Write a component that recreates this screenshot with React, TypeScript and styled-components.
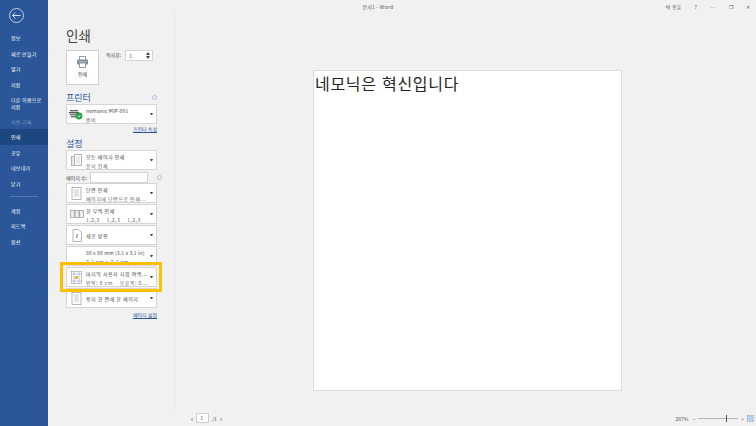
import React from "react";
import styled, { createGlobalStyle } from "styled-components";

const FONT = `"Noto Sans CJK KR", "Noto Sans", sans-serif`;

const GlobalStyle = createGlobalStyle`
  html, body { margin: 0; padding: 0; background: #f1f1f1; }
  body { font-family: ${FONT}; color: #444; }
  * { box-sizing: border-box; }
`;

const Shell = styled.div`
  display: flex;
  width: 756px;
  height: 426px;
  overflow: hidden;
  background: #f1f1f1;
`;

const Sidebar = styled.nav`
  display: flex;
  flex-direction: column;
  flex: 0 0 48px;
  background: #2b579a;
`;

const BackButton = styled.div`
  display: flex;
  height: 30px;
  padding: 8px 0 0 9px;
  color: #fff;
`;

const NavItem = styled.div<{ $active?: boolean; $dim?: boolean; $tall?: boolean }>`
  display: flex;
  align-items: center;
  padding: 0 0 0 11px;
  height: ${(p) => (p.$tall ? "21px" : "15.6px")};
  font-size: 5px;
  letter-spacing: 0.25px;
  line-height: 7px;
  white-space: nowrap;
  color: ${(p) => (p.$dim ? "#7f9cc6" : "#fff")};
  background: ${(p) => (p.$active ? "#1c4780" : "transparent")};
`;

const NavDivider = styled.div`
  height: 1px;
  margin: 5px 10px 5px;
  background: #5479ae;
`;

const Main = styled.div`
  flex: 1;
  display: flex;
  flex-direction: column;
  min-width: 0;
`;

const TitleBar = styled.div`
  display: flex;
  align-items: center;
  height: 12px;
  font-size: 5px;
  letter-spacing: 0.25px;
  color: #555;
`;

const TitleText = styled.div`
  flex: 1;
  text-align: center;
  padding-left: 42px;
`;

const WindowControls = styled.div`
  display: flex;
  align-items: center;
  gap: 13px;
  padding-right: 6px;
`;

const Body = styled.div`
  flex: 1;
  display: flex;
  min-height: 0;
`;

const Settings = styled.section`
  position: relative;
  flex: 0 0 127px;
  min-width: 0;
  padding: 14px 17px 0 18px;
  border-right: 1px solid #e6e6e6;
`;

const PageTitle = styled.h1`
  margin: 0;
  height: 24px;
  font-size: 13.5px;
  font-weight: 400;
  line-height: 18px;
  color: #444;
`;

const PrintRow = styled.div`
  display: flex;
  height: 35px;
  gap: 7px;
`;

const PrintButton = styled.div`
  display: flex;
  flex-direction: column;
  align-items: center;
  width: 33px;
  height: 35px;
  padding-top: 5px;
  background: #fff;
  border: 1px solid #d0d0d0;
  font-size: 5px;
  color: #444;
`;

const PrintLabel = styled.span`
  margin-top: 2px;
  line-height: 7px;
`;

const Copies = styled.div`
  display: flex;
  align-items: flex-start;
  gap: 4px;
  font-size: 5px;
`;

const CopiesLabel = styled.span`
  line-height: 10px;
`;

const Spinner = styled.div`
  display: flex;
  align-items: center;
  justify-content: space-between;
  width: 28px;
  height: 11px;
  padding: 0 2px 0 3px;
  background: #fff;
  border: 1px solid #d5d5d5;
  color: #444;
`;

const Arrows = styled.div`
  display: flex;
  flex-direction: column;
  gap: 1px;
`;

const SectionHead = styled.div<{ $top: number }>`
  display: flex;
  justify-content: space-between;
  align-items: center;
  height: 13px;
  margin-top: ${(p) => p.$top}px;
  font-size: 9px;
  color: #2b579a;
`;

const InfoDot = styled.span`
  width: 5px;
  height: 5px;
  border: 1px solid #a9c1e0;
  border-radius: 50%;
`;

const Select = styled.div<{ $gap?: number }>`
  display: flex;
  align-items: center;
  height: 20px;
  margin-bottom: ${(p) => p.$gap ?? 1}px;
  background: #fff;
  border: 1px solid #d5d5d5;
  font-size: 5px;
  letter-spacing: 0.5px;
  color: #444;
`;

const SelectIcon = styled.div`
  display: flex;
  justify-content: center;
  flex: 0 0 19px;
`;

const SelectText = styled.div`
  flex: 1;
  min-width: 0;
  white-space: nowrap;
  overflow: hidden;
  line-height: 9px;
  padding-top: 1px;
`;

const SubLine = styled.div`
  display: flex;
  gap: 7px;
  color: #666;
  line-height: 9px;
`;

const Latin = styled.div`
  letter-spacing: 0.15px;
`;

const Caret = styled.span`
  width: 0;
  height: 0;
  flex: 0 0 3px;
  margin: 0 3px 0 1px;
  border-left: 1.5px solid transparent;
  border-right: 1.5px solid transparent;
  border-top: 2px solid #444;
`;

const LinkRow = styled.div`
  text-align: right;
  height: 9px;
  font-size: 5px;
  line-height: 9px;
  color: #2b579a;
  text-decoration: underline;
`;

const PagesRow = styled.div`
  display: flex;
  align-items: center;
  height: 12px;
  font-size: 5px;
  gap: 3px;
  position: relative;
`;

const PagesInput = styled.div`
  width: 58px;
  height: 11px;
  background: #fff;
  border: 1px solid #d5d5d5;
`;

const PagesInfo = styled(InfoDot)`
  position: absolute;
  right: -5px;
  top: 4px;
`;

const Highlight = styled.div`
  position: absolute;
  left: 12px;
  top: 250px;
  width: 102px;
  height: 30px;
  border: 3px solid #fdc000;
  pointer-events: none;
`;

const Preview = styled.section`
  flex: 1;
  display: flex;
  flex-direction: column;
  padding: 58px 0 0 138px;
`;

const Sheet = styled.div`
  width: 309px;
  height: 321px;
  padding: 0 1px;
  background: #fff;
  border: 1px solid #dcdcdc;
  font-size: 16px;
  line-height: 24px;
  letter-spacing: 0.7px;
  word-spacing: 1px;
  color: #222;
`;

const Footer = styled.div`
  display: flex;
  align-items: center;
  flex: 0 0 16px;
  padding-left: 143px;
  font-size: 5px;
  color: #555;
`;

const Pager = styled.div`
  display: flex;
  align-items: center;
  gap: 3px;
`;

const PageBox = styled.div`
  width: 13px;
  height: 10px;
  padding-left: 3px;
  background: #fff;
  border: 1px solid #cfcfcf;
  line-height: 8px;
  color: #2b579a;
`;

const PagerArrow = styled.span`
  font-size: 7px;
  line-height: 7px;
  color: #333;
`;

const ZoomBar = styled.div`
  display: flex;
  align-items: center;
  gap: 3px;
  margin-left: auto;
  padding-right: 2px;
`;

const ZoomPercent = styled.span`
  margin-right: 1px;
`;

const ZoomTrack = styled.div`
  position: relative;
  width: 40px;
  height: 1px;
  background: #b5b5b5;
`;

const ZoomThumb = styled.span`
  position: absolute;
  left: 28px;
  top: -3px;
  width: 1px;
  height: 7px;
  background: #555;
`;

const PrinterIcon = () => (
  <svg width="13" height="12" viewBox="0 0 13 12">
    <rect x="3.5" y="0.5" width="6" height="4" fill="#fff" stroke="#9a9a9a" />
    <rect x="1" y="3.5" width="11" height="5" rx="1" fill="#7b8ba0" />
    <rect x="3.5" y="7" width="6" height="4.5" fill="#fff" stroke="#9a9a9a" />
    <rect x="2.5" y="5" width="8" height="1" fill="#a9b6c6" />
  </svg>
);

const DeviceIcon = () => (
  <svg width="15" height="12" viewBox="0 0 15 12">
    <rect x="1" y="2" width="8" height="1.4" fill="#666" />
    <rect x="0" y="4" width="10" height="1.4" fill="#555" />
    <rect x="1" y="6" width="8" height="1.4" fill="#777" />
    <rect x="2" y="8" width="6" height="1.4" fill="#666" />
    <circle cx="10" cy="8" r="3.4" fill="#1f9e3f" />
    <path d="M8.4 8l1.2 1.2 2-2.2" stroke="#fff" strokeWidth="1" fill="none" />
  </svg>
);

const SheetsIcon = () => (
  <svg width="11" height="13" viewBox="0 0 11 13" fill="#fff" stroke="#a5a5a5" strokeWidth="0.8">
    <rect x="0.5" y="2.5" width="6" height="9" fill="#e6e6e6" />
    <rect x="3.5" y="0.5" width="7" height="11" />
    <path d="M5 3h4M5 5h4M5 7h4M5 9h4" strokeWidth="0.5" />
  </svg>
);

const PageIcon = () => (
  <svg width="11" height="13" viewBox="0 0 11 13" fill="#fff" stroke="#a5a5a5" strokeWidth="0.8">
    <rect x="1" y="0.5" width="9" height="12" />
    <path d="M3 3h5M3 5h5M3 7h5M3 9h5" strokeWidth="0.6" />
  </svg>
);

const CollateIcon = () => (
  <svg width="14" height="10" viewBox="0 0 14 10" fill="#eee" stroke="#999" strokeWidth="0.7">
    <rect x="0.5" y="1.5" width="4" height="7" />
    <rect x="5" y="1.5" width="4" height="7" />
    <rect x="9.500" y="1.500" width="4" height="7" />
  </svg>
);

const PortraitIcon = () => (
  <svg width="10" height="13" viewBox="0 0 10 13" fill="#fff" stroke="#a5a5a5" strokeWidth="0.8">
    <path d="M1 0.5h5.500l3 3v9h-8.500z" />
    <path d="M4 9l2-4M5 5v4" strokeWidth="0.6" stroke="#777" />
  </svg>
);

const MarginIcon = () => (
  <svg width="11" height="13" viewBox="0 0 11 13" fill="#fff" stroke="#8ba3c2" strokeWidth="0.6">
    <rect x="0.5" y="0.5" width="10" height="12" stroke="#999" />
    <path d="M3 .5v12M8 .5v12M.5 3h10M.5 10h10" />
    <rect x="4" y="5" width="3" height="3" fill="#f3b23c" stroke="none" />
  </svg>
);

const BackIcon = () => (
  <svg width="15" height="15" viewBox="0 0 15 15" fill="none" stroke="#fff">
    <circle cx="7.500" cy="7.500" r="7" strokeWidth="0.7" />
    <path d="M11.500 7.500h-8M6.500 4.500l-3 3 3 3" strokeWidth="0.8" />
  </svg>
);

const navTop = ["정보", "새로 만들기", "열기", "저장"];
const navMid = ["공유", "내보내기", "닫기"];
const navBottom = ["계정", "피드백", "옵션"];

export default function App() {
  return (
    <Shell>
      <GlobalStyle />
      <Sidebar>
        <BackButton>
          <BackIcon />
        </BackButton>
        {navTop.map((label) => (
          <NavItem key={label}>{label}</NavItem>
        ))}
        <NavItem $tall>
          <span>
            다른 이름으로
            <br />
            저장
          </span>
        </NavItem>
        <NavItem $dim>사용 기록</NavItem>
        <NavItem $active>인쇄</NavItem>
        {navMid.map((label) => (
          <NavItem key={label}>{label}</NavItem>
        ))}
        <NavDivider />
        {navBottom.map((label) => (
          <NavItem key={label}>{label}</NavItem>
        ))}
      </Sidebar>
      <Main>
        <TitleBar>
          <TitleText>문서1 - Word</TitleText>
          <WindowControls>
            <span>박 종훈</span>
            <span>?</span>
            <span>─</span>
            <span>❐</span>
            <span>✕</span>
          </WindowControls>
        </TitleBar>
        <Body>
          <Settings>
            <PageTitle>인쇄</PageTitle>
            <PrintRow>
              <PrintButton>
                <PrinterIcon />
                <PrintLabel>인쇄</PrintLabel>
              </PrintButton>
              <Copies>
                <CopiesLabel>복사본:</CopiesLabel>
                <Spinner>
                  1
                  <Arrows>
                    <svg width="4" height="3" viewBox="0 0 4 3">
                      <path d="M2 0l2 3H0z" fill="#444" />
                    </svg>
                    <svg width="4" height="3" viewBox="0 0 4 3">
                      <path d="M2 3l2-3H0z" fill="#444" />
                    </svg>
                  </Arrows>
                </Spinner>
              </Copies>
            </PrintRow>
            <SectionHead $top={6}>
              프린터
              <InfoDot />
            </SectionHead>
            <Select $gap={0}>
              <SelectIcon>
                <DeviceIcon />
              </SelectIcon>
              <SelectText>
                <Latin>nemonic MIP-001</Latin>
                <SubLine>준비</SubLine>
              </SelectText>
              <Caret />
            </Select>
            <LinkRow>프린터 속성</LinkRow>
            <SectionHead $top={4}>설정</SectionHead>
            <Select>
              <SelectIcon>
                <SheetsIcon />
              </SelectIcon>
              <SelectText>
                모든 페이지 인쇄
                <SubLine>문서 전체</SubLine>
              </SelectText>
              <Caret />
            </Select>
            <PagesRow>
              페이지 수:
              <PagesInput />
              <PagesInfo />
            </PagesRow>
            <Select>
              <SelectIcon>
                <PageIcon />
              </SelectIcon>
              <SelectText>
                단면 인쇄
                <SubLine>페이지에 단면으로 인쇄...</SubLine>
              </SelectText>
              <Caret />
            </Select>
            <Select>
              <SelectIcon>
                <CollateIcon />
              </SelectIcon>
              <SelectText>
                한 부씩 인쇄
                <SubLine>
                  <span>1,2,3</span>
                  <span>1,2,3</span>
                  <span>1,2,3</span>
                </SubLine>
              </SelectText>
              <Caret />
            </Select>
            <Select>
              <SelectIcon>
                <PortraitIcon />
              </SelectIcon>
              <SelectText>세로 방향</SelectText>
              <Caret />
            </Select>
            <Select>
              <SelectIcon />
              <SelectText>
                <Latin>80 x 80 mm (3.1 x 3.1 in)</Latin>
                <SubLine>7.1 cm x 7.1 cm</SubLine>
              </SelectText>
              <Caret />
            </Select>
            <Select>
              <SelectIcon>
                <MarginIcon />
              </SelectIcon>
              <SelectText>
                마지막 사용자 지정 여백...
                <SubLine>
                  <span>왼쪽: 0 cm</span>
                  <span>오른쪽: 0...</span>
                </SubLine>
              </SelectText>
              <Caret />
            </Select>
            <Select $gap={2}>
              <SelectIcon>
                <PageIcon />
              </SelectIcon>
              <SelectText>용지 한 면에 한 페이지</SelectText>
              <Caret />
            </Select>
            <LinkRow>페이지 설정</LinkRow>
            <Highlight />
          </Settings>
          <Preview>
            <Sheet>네모닉은 혁신입니다</Sheet>
          </Preview>
        </Body>
        <Footer>
          <Pager>
            <PagerArrow>‹</PagerArrow>
            <PageBox>1</PageBox>
            <span>/1</span>
            <PagerArrow>›</PagerArrow>
          </Pager>
          <ZoomBar>
            <ZoomPercent>287%</ZoomPercent>
            <span>−</span>
            <ZoomTrack>
              <ZoomThumb />
            </ZoomTrack>
            <span>+</span>
            <svg width="7" height="7" viewBox="0 0 7 7" fill="#bcd3ec" stroke="#6f8fb5" strokeWidth="0.6">
              <rect x="0.500" y="0.500" width="6" height="6" strokeDasharray="1.500 1" />
            </svg>
          </ZoomBar>
        </Footer>
      </Main>
    </Shell>
  );
}
